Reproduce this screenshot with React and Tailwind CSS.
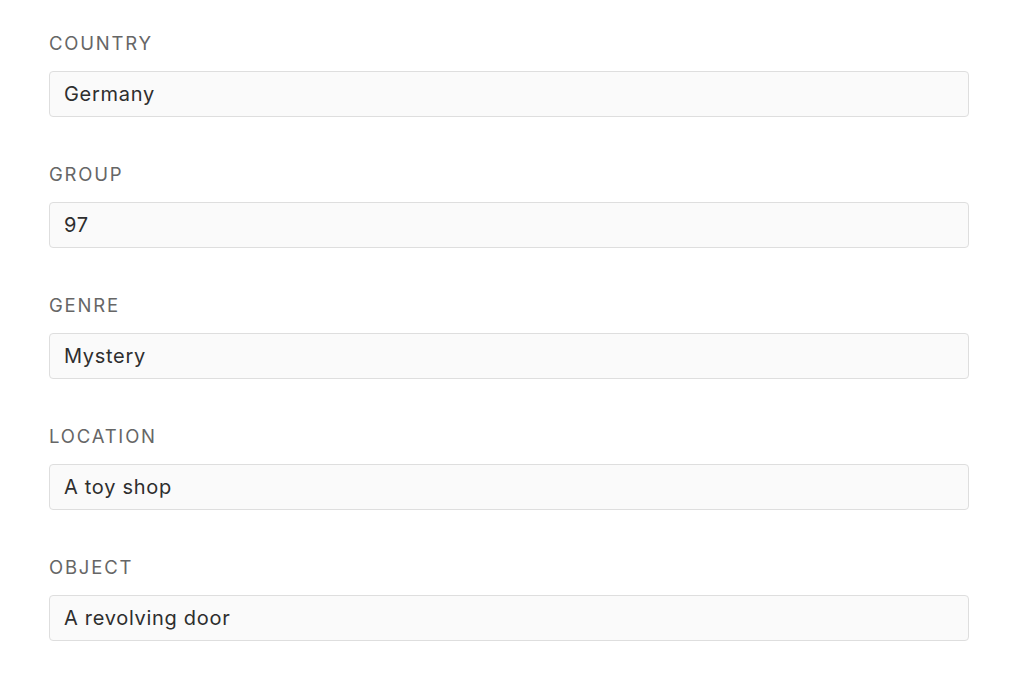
const fields = [
  { label: 'COUNTRY', value: 'Germany' },
  { label: 'GROUP', value: '97' },
  { label: 'GENRE', value: 'Mystery' },
  { label: 'LOCATION', value: 'A toy shop' },
  { label: 'OBJECT', value: 'A revolving door' },
];

export default function App() {
  return (
    <div className="min-h-screen bg-white pt-[31px] pl-[49px] font-['Inter',sans-serif]">
      <div className="w-[920px] flex flex-col">
        {fields.map((f) => (
          <div key={f.label} className="flex flex-col pb-[45px]">
            <label className="h-[24px] leading-[24px] text-[18.5px] text-[#666] tracking-[1.8px]">{f.label}</label>
            <input
              readOnly
              value={f.value}
              className="mt-[16px] h-[46px] w-full rounded-[4px] border border-[#dedede] bg-[#fafafa] px-[14px] text-[20px] text-[#2e2e2e] tracking-[0.7px] outline-none"
            />
          </div>
        ))}
      </div>
    </div>
  );
}
